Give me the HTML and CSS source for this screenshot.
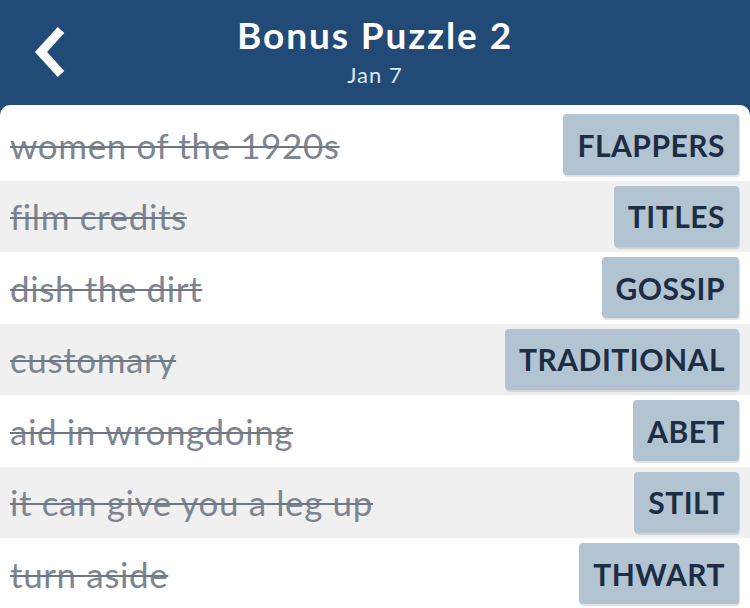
FILE: index.html
```html
<!DOCTYPE html>
<html>
<head>
<meta charset="utf-8">
<link rel="stylesheet" href="styles.css">
</head>
<body>
<header class="header">
  <button class="back" aria-label="Back">
    <svg width="40" height="56" viewBox="0 0 40 56"><polyline points="29,5 9,27 29,49" fill="none" stroke="#fff" stroke-width="9" stroke-linecap="butt" stroke-linejoin="miter"/></svg>
  </button>
  <div class="titles">
    <h1 class="title">Bonus Puzzle 2</h1>
    <div class="subtitle">Jan 7</div>
  </div>
</header>
<main class="card">
  <div class="row"><span class="clue">women of the 1920s</span><span class="answer">FLAPPERS</span></div>
  <div class="row alt"><span class="clue">film credits</span><span class="answer">TITLES</span></div>
  <div class="row"><span class="clue">dish the dirt</span><span class="answer">GOSSIP</span></div>
  <div class="row alt"><span class="clue">customary</span><span class="answer">TRADITIONAL</span></div>
  <div class="row"><span class="clue">aid in wrongdoing</span><span class="answer">ABET</span></div>
  <div class="row alt"><span class="clue">it can give you a leg up</span><span class="answer">STILT</span></div>
  <div class="row"><span class="clue">turn aside</span><span class="answer">THWART</span></div>
</main>
</body>
</html>
```
FILE: styles.css
```css
html, body {
  margin: 0;
  padding: 0;
  background: #214a77;
  font-family: "Lato", "Open Sans", sans-serif;
  overflow: hidden;
}
.header {
  position: relative;
  height: 105px;
  display: flex;
  justify-content: center;
}
.back {
  position: absolute;
  left: 32px;
  top: 25px;
  background: none;
  border: 0;
  padding: 0;
  width: 40px;
  height: 56px;
}
.back svg { display: block; }
.titles {
  text-align: center;
  color: #fff;
}
.title {
  margin: 12px 0 0;
  font-size: 37px;
  font-weight: 700;
  line-height: 46px;
  letter-spacing: 1.9px;
}
.subtitle {
  font-size: 22px;
  line-height: 28px;
  margin-top: 3px;
  color: #dfe8f2;
  letter-spacing: 1px;
}
.card {
  background: #fff;
  border-radius: 10px 10px 0 0;
  padding-top: 4px;
  height: 510px;
}
.row {
  height: 71.5px;
  display: flex;
  align-items: center;
  justify-content: space-between;
  padding: 0 11px 0 10px;
  box-sizing: border-box;
}
.row.alt { background: #f0f0f0; }
.clue {
  font-size: 35px;
  color: #7d8690;
  letter-spacing: 0.6px;
  text-decoration: line-through;
  text-decoration-thickness: 2px;
  text-decoration-color: #6e7782;
}
.answer {
  background: #b2c3d2;
  color: #1c2d44;
  font-weight: 700;
  font-size: 30px;
  height: 61px;
  display: flex;
  align-items: center;
  padding: 0 14px;
  border-radius: 4px;
  box-shadow: 1px 2px 1px rgba(0,0,0,0.12);
  letter-spacing: 0.5px;
}
```
